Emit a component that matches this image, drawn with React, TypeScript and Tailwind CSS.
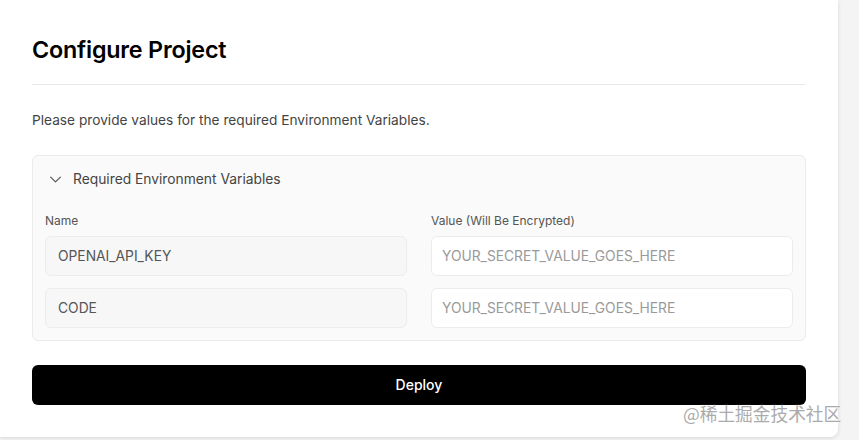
const fields = [
  { name: 'OPENAI_API_KEY' },
  { name: 'CODE' },
]

function Chevron() {
  return (
    <svg width="13" height="13" viewBox="0 0 12 12" fill="none" className="text-[#555]">
      <path d="M1.5 3.75L6 8.25L10.5 3.75" stroke="currentColor" strokeWidth="1.1" strokeLinecap="round" strokeLinejoin="round" />
    </svg>
  )
}

export default function App() {
  return (
    <div
      className="relative h-[440px] w-[859px] overflow-hidden bg-[#f4f4f4]"
      style={{ fontFamily: 'Inter, "Noto Sans", sans-serif' }}
    >
      <div className="h-[437px] w-[838px] rounded-br-lg bg-white px-8 pt-[34px] shadow-[0_1px_4px_rgba(0,0,0,0.12)]">
        <h1 className="text-[23.3px] font-semibold leading-8 tracking-[-0.2px] text-black">Configure Project</h1>
        <div className="mt-[18px] w-[773px] border-t border-[#e9e9e9]" />

        <p className="mt-[25px] text-[13.7px] leading-5 text-[#444]">
          Please provide values for the required Environment Variables.
        </p>

        <div className="mt-[25px] w-[774px] rounded-md border border-[#ebebeb] bg-[#fafafa]">
          <div className="flex h-[47px] items-center gap-[11px] pl-[16px]">
            <Chevron />
            <span className="text-[13.8px] text-[#444]">Required Environment Variables</span>
          </div>
          <div className="px-3 pb-3">
            <div className="grid grid-cols-2 gap-x-6">
              <div className="mt-[10px] text-xs leading-4 text-[#555]">Name</div>
              <div className="mt-[10px] text-xs leading-4 text-[#555]">Value (Will Be Encrypted)</div>
            </div>
            <div className="mt-[7px] flex flex-col gap-3">
              {fields.map((f) => (
                <div key={f.name} className="grid grid-cols-2 gap-x-6">
                  <div className="flex h-10 items-center rounded-md border border-[#ececec] bg-[#f7f7f7] px-3 text-[13.8px] text-[#555]">
                    {f.name}
                  </div>
                  <div className="flex h-10 items-center rounded-md border border-[#ececec] bg-white px-[10px] text-[13.8px] text-[#9a9a9a]">
                    YOUR_SECRET_VALUE_GOES_HERE
                  </div>
                </div>
              ))}
            </div>
          </div>
        </div>

        <button className="mt-[24px] flex h-10 w-[774px] items-center justify-center rounded-md bg-black text-sm font-medium text-white">
          Deploy
        </button>
      </div>

      <div
        className="absolute left-[683px] top-[401px] text-[17.7px] leading-6 text-[#ababab] [text-shadow:0_0_2px_#fff]"
        style={{ fontFamily: '"Noto Sans CJK SC", sans-serif' }}
      >
        @稀土掘金技术社区
      </div>
    </div>
  )
}
